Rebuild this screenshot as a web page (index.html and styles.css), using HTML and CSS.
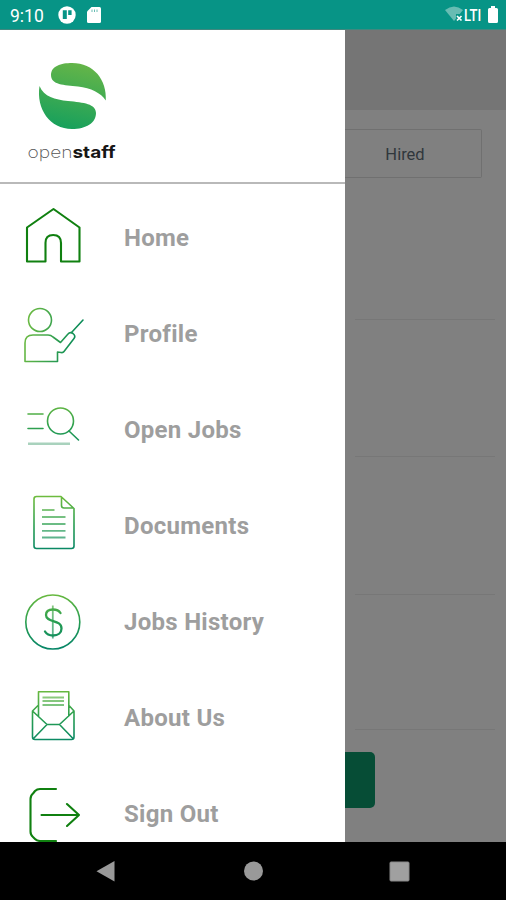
FILE: index.html
```
<!DOCTYPE html>
<html lang="en">
<head>
<meta charset="utf-8">
<title>openstaff</title>
<link rel="stylesheet" href="styles.css">
</head>
<body>
<div class="status">
  <span class="time">9:10</span>
  <svg class="app-dot" width="18" height="18" viewBox="0 0 18 18"><circle cx="9" cy="9" r="8.7" fill="#fff"/><path d="M4.8 4.3h4v8.6h-4zM10.2 4.3h3.4v4.6h-3.4z" fill="#079486"/></svg>
  <svg class="sd" width="14" height="16" viewBox="0 0 14 16"><path d="M4.5 0H12.5Q14 0 14 1.5V14.5Q14 16 12.5 16H1.500Q0 16 0 14.500V4.500Z" fill="#fff"/><path d="M5 2.500v2.500M7.500 2.500v2.500M10 2.500v2.500" stroke="#68bcb3"/></svg>
  <span class="grow"></span>
  <svg class="wifi" width="19" height="17" viewBox="0 0 19 17"><path d="M0 4Q9-3 18 4L9 15Z" fill="#68bcb3"/><path d="M11 8h7v8h-7z" fill="#079486"/><path d="M12 10l4.500 4.500M16.500 10L12 14.500" stroke="#fff" stroke-width="1.700"/></svg>
  <span class="lte">LTI</span>
  <svg class="battery" width="10" height="17" viewBox="0 0 10 17"><path d="M3 0h4v2h1.500Q10 2 10 3.500v12Q10 17 8.500 17h-7Q0 17 0 15.500v-12Q0 2 1.500 2H3z" fill="#fff"/></svg>
</div>
<div class="main">
  <nav class="drawer">
    <header class="brand">
      <svg width="110" height="120" viewBox="20 50 110 120">
        <defs><linearGradient id="leaf" gradientUnits="userSpaceOnUse" x1="80" y1="63" x2="66" y2="129"><stop offset="0" stop-color="#65b548"/><stop offset="1" stop-color="#17a05c"/></linearGradient></defs>
        <path fill="url(#leaf)" d="M51 75C51 66 61 63 72 63C94 63 107 80 105.800 100.500C101 93 91 88 78 86.500C64 85 51 85 51 75Z"/>
        <path fill="url(#leaf)" d="M39.500 86C44 97 55 99.500 68 101C84 102.500 96 104 96 113C96 123 86 129 72 129C50 129 36 109 39.500 86Z"/>
        <text class="thin" x="27.500" y="158" textLength="45" lengthAdjust="spacingAndGlyphs">open</text>
        <text class="heavy" x="72.500" y="158" textLength="43" lengthAdjust="spacingAndGlyphs">staff</text>
      </svg>
    </header>
    <ul class="menu">
      <li><svg class="icon flat" viewBox="0 0 66 64"><path d="M33.500 3L59.500 21.500V55.500H41V37Q41 29 33.200 29T25.500 37V55.500H7V21.500Z"/></svg><span>Home</span></li>
      <li><svg class="icon" viewBox="0 0 66 64">
        <defs><linearGradient id="across" gradientUnits="userSpaceOnUse" x1="4" y1="30" x2="56" y2="40"><stop offset="0" stop-color="#6dbb42"/><stop offset="1" stop-color="#0b8c58"/></linearGradient>
        <linearGradient id="down" gradientUnits="userSpaceOnUse" x1="30" y1="3" x2="33" y2="58"><stop offset="0" stop-color="#6dbb3e"/><stop offset=".55" stop-color="#259c52"/><stop offset="1" stop-color="#078667"/></linearGradient></defs>
        <g stroke="url(#across)"><circle cx="20" cy="18" r="11.500"/><path d="M5 59.500V41Q5 33 13 33H28Q31 33 33 35L40.500 40.500L48 32Q50 29.500 53 31.500Q56 34 54 36.500L44 49.500Q43 51 41 50.500L37.500 50V59.500ZM51.500 30.500L63 18"/></g></svg><span>Profile</span></li>
      <li><svg class="icon" viewBox="0 0 66 64"><g stroke="url(#down)"><circle cx="40.500" cy="23" r="13"/><path d="M8 16H23.010M8 30.500H23.010M49 33L58.500 42"/></g><path class="base" d="M8 45.800H50"/></svg><span>Open Jobs</span></li>
      <li><svg class="icon" viewBox="0 0 66 64"><g stroke="url(#down)"><path d="M16.500 2.500H41L54 14.500V52Q54 54.500 51.500 54.500H16.500Q14 54.500 14 52V5Q14 2.500 16.500 2.500ZM41.500 3V11.500Q41.500 14 44 14H53.500"/><path class="rules" d="M22 16H34.500M22 23H45.500M22 30H45.500M22 36.800H45.500M22 43.500H45.500"/></g></svg><span>Documents</span></li>
      <li><svg class="icon" viewBox="0 0 66 64"><g stroke="url(#down)"><circle cx="32.800" cy="32" r="27"/><path class="dollar" d="M40.500 23C39 20.500 36.500 19.500 33 19.500C28 19.500 26 22 26 25C26 33 41.500 29 41.500 38.500C41.500 43 38 45.500 33 45.500C29 45.500 26.500 44 25 41.500"/><path class="rules" d="M32.800 15.500L32.810 48.500"/></g></svg><span>Jobs History</span></li>
      <li><svg class="icon" viewBox="0 0 66 64"><g stroke="url(#down)"><path d="M18.500 30V5.800H48.800V30M18 19.500L12.500 25L27 38.500H39.500L54 25L49 19.500M12.500 25V51Q12.500 53.500 15 53.500H51.500Q54 53.500 54 51V25M27 38.500L13.500 52.500M39.500 38.500L53 52.500"/><path class="rules" d="M22.500 11.500H44M22.500 15H44M22.500 19H44"/></g></svg><span>About Us</span></li>
      <li><svg class="icon flat" viewBox="0 0 66 64"><path d="M36 7H20Q17 7 15 9L13 11.500Q10.500 13.500 10.500 17V49.500Q10.500 53 13 55L15 57Q17 59 20 59H36M21.500 33H59M47 22L59 33L47 44"/></svg><span>Sign Out</span></li>
    </ul>
  </nav>
  <section class="page">
    <div class="appbar"></div>
    <div class="tab">Hired</div>
    <div class="cell first"></div>
    <div class="cell"></div>
    <div class="cell taller"></div>
    <div class="cell last"></div>
    <div class="action"></div>
  </section>
</div>
<div class="navbar">
  <svg width="506" height="58" viewBox="0 0 506 58"><path d="M114.500 19V39.500L96.500 29.200Z" fill="#999"/><circle cx="253.500" cy="29" r="9.500" fill="#999"/><rect x="390" y="20" width="19" height="19" rx="1" fill="#a0a0a0" stroke="#888"/></svg>
</div>
</body>
</html>
```
FILE: styles.css
```
* { box-sizing: border-box; }
body {
  margin: 0;
  width: 506px;
  height: 900px;
  overflow: hidden;
  display: flex;
  flex-direction: column;
  font-family: Roboto, "Liberation Sans", sans-serif;
}
.status {
  height: 30px;
  flex: none;
  display: flex;
  align-items: center;
  padding: 0 8px 0 10px;
  background: #079486;
  border-bottom: 1px solid #40887f;
  color: #fff;
}
.time { width: 48px; font-size: 17.5px; padding-top: 2px; }
.sd { margin-left: 11px; }
.grow { flex: 1; }
.lte { font-size: 16px; font-weight: 500; width: 19px; margin: 1px 5px 0 0; transform: scaleX(.82); transform-origin: left; }
.main { height: 812px; flex: none; display: flex; overflow: hidden; }
.drawer { width: 345px; flex: none; background: #fff; }
.brand { height: 154px; padding: 20px 0 0 20px; border-bottom: 2px solid #b9b9b9; }
.brand svg { display: block; }
.thin, .heavy { font-family: Inter, sans-serif; font-size: 16.5px; }
.thin { font-weight: 200; fill: #555; }
.heavy { font-weight: 700; fill: #161616; }
.menu { list-style: none; margin: 0; padding: 6px 0 0; }
.menu li {
  height: 96px;
  display: flex;
  align-items: center;
  padding-left: 20px;
  color: #9e9e9e;
  font-size: 24px;
  font-weight: 700;
  letter-spacing: .28px;
}
.menu span { margin-left: 38px; white-space: nowrap; }
.icon { width: 66px; height: 64px; flex: none; fill: none; stroke-width: 1.6; stroke-linejoin: round; stroke-linecap: round; }
.flat { stroke: #108010; stroke-width: 2.1; }
.base { stroke: #a9d2bd; stroke-width: 2.6; stroke-linecap: butt; }
.rules { stroke-width: 1.8; opacity: .7; stroke-linecap: butt; }
.dollar { stroke-width: 2.3; }
.page { flex: 1; background: #808080; display: flex; flex-direction: column; }
.appbar { height: 80px; flex: none; background: #757575; }
.tab {
  width: 137px;
  height: 49px;
  flex: none;
  margin-top: 19px;
  padding: 2px 16px 0 0;
  display: flex;
  align-items: center;
  justify-content: center;
  border: 1px solid #707070;
  border-left: 0;
  border-radius: 0 2px 2px 0;
  color: #30373c;
  font-size: 16.5px;
}
.cell { height: 137px; flex: none; margin: 0 11px 0 10px; border-bottom: 1px solid #777; }
.first { height: 142px; }
.taller { height: 138px; }
.last { height: 135px; }
.action { width: 30px; height: 56px; margin-top: 22px; flex: none; border-radius: 0 5px 5px 0; background: #064d36; }
.navbar { height: 58px; flex: none; background: #000; }
.navbar svg { display: block; }
```
